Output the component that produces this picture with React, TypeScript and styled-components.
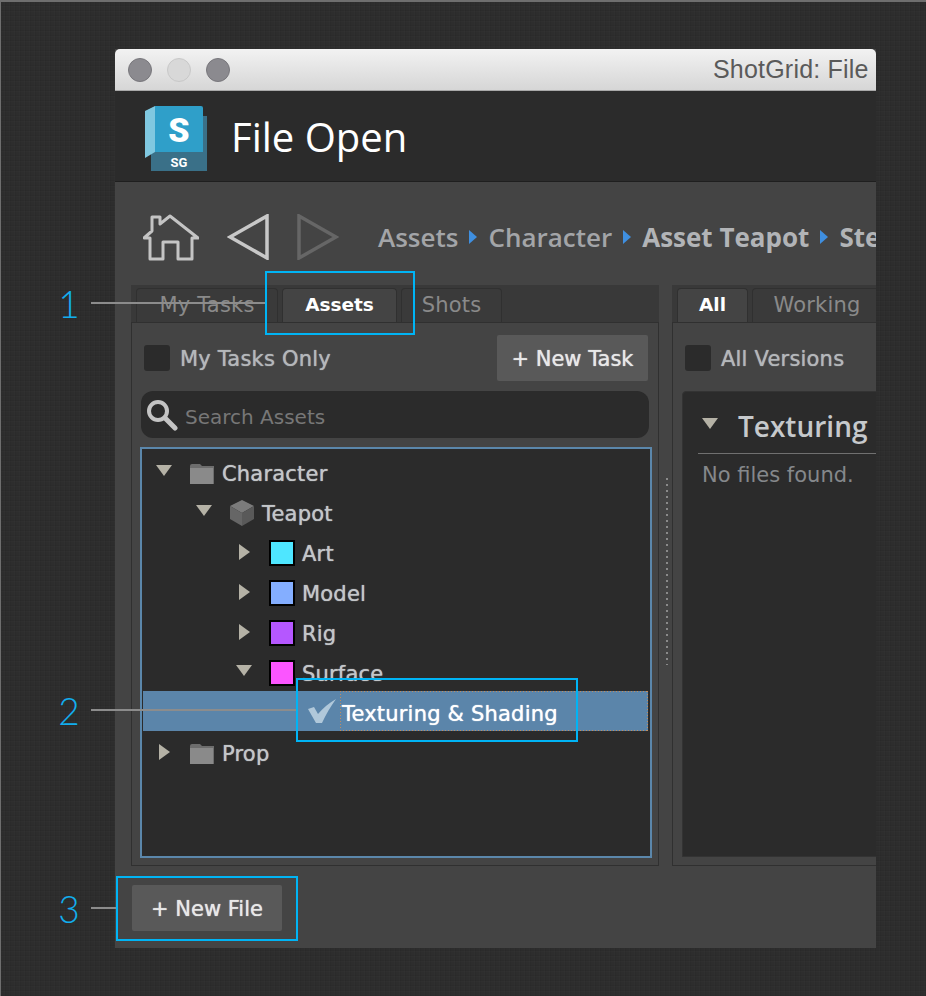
import React from 'react';
import styled, { createGlobalStyle } from 'styled-components';

const GlobalStyle = createGlobalStyle`
  html, body { margin: 0; padding: 0; background: #2c2c2c; }
  * { box-sizing: border-box; }
`;

const uiFont = `"DejaVu Sans", "Open Sans", sans-serif`;
const softText = `text-shadow: 0 0 1px currentColor;`;

const Page = styled.div`
  position: relative;
  width: 926px;
  height: 996px;
  overflow: hidden;
  padding: 49px 0 0 115px;
  font-family: "Open Sans", "Liberation Sans", sans-serif;
  background-color: #2d2d2d;
  background-image:
    repeating-linear-gradient(90deg, rgba(0, 0, 0, 0.05) 0 1px, transparent 1px 4px, rgba(255, 255, 255, 0.01) 4px 5px),
    repeating-linear-gradient(0deg, rgba(0, 0, 0, 0.05) 0 1px, transparent 1px 4px, rgba(255, 255, 255, 0.01) 4px 5px);
  box-shadow: inset 1px 2px 0 #6e6e6e;
`;

const Window = styled.div`
  width: 761px;
  height: 899px;
  display: flex;
  flex-direction: column;
  overflow: hidden;
  background: #444;
`;

const TitleBar = styled.div`
  flex: none;
  height: 42px;
  display: flex;
  align-items: center;
  gap: 15px;
  padding-left: 13px;
  border-radius: 5px 5px 0 0;
  background: linear-gradient(#f2f2f2, #d6d6d6);
  border-bottom: 1px solid #a9a9a9;
`;

const Light = styled.span<{ $off?: boolean }>`
  flex: none;
  width: 24px;
  height: 24px;
  border-radius: 50%;
  background: ${(p) => (p.$off ? '#d8d8d8' : '#8b8a8f')};
  border: 1px solid ${(p) => (p.$off ? '#c8c8c8' : '#78777c')};
`;

const WindowTitle = styled.span`
  margin-left: 468px;
  font-family: "Liberation Sans", Arial, sans-serif;
  font-size: 25px;
  letter-spacing: 0.2px;
  color: #5a5a5a;
  white-space: nowrap;
`;

const Header = styled.header`
  flex: none;
  height: 91px;
  display: flex;
  align-items: center;
  padding: 5px 0 0 30px;
  background: #2b2b2b;
  border-bottom: 1px solid #1f1f1f;
`;

const AppName = styled.h1`
  margin: 0 0 4px 24px;
  font-size: 40px;
  font-weight: 400;
  color: #fff;
`;

const NavRow = styled.nav`
  flex: none;
  height: 103px;
  display: flex;
  align-items: center;
  gap: 28px;
  padding: 7px 0 0 28px;
  white-space: nowrap;

  svg {
    flex: none;
  }
`;

const Crumbs = styled.div`
  flex: none;
  display: flex;
  align-items: center;
  gap: 11px;
  margin-left: 11px;
  font-size: 26px;
`;

const Crumb = styled.span<{ $strong?: boolean }>`
  font-weight: ${(p) => (p.$strong ? 700 : 600)};
  color: ${(p) => (p.$strong ? '#b2b4b7' : '#a3a5a8')};
`;

const CrumbArrow = styled.span`
  width: 0;
  height: 0;
  border-left: 8px solid #3f8fe0;
  border-top: 7px solid transparent;
  border-bottom: 7px solid transparent;
`;

const Panels = styled.div`
  flex: none;
  height: 581px;
  display: flex;
  padding-left: 16px;
`;

const Panel = styled.section<{ $width: number }>`
  flex: none;
  width: ${(p) => p.$width}px;
  display: flex;
  flex-direction: column;
  background: #393939;
`;

const TabStrip = styled.div`
  flex: none;
  height: 37px;
  display: flex;
  align-items: flex-end;
  gap: 4px;
  padding-left: 5px;
`;

const Tab = styled.div<{ $width: number; $active?: boolean }>`
  width: ${(p) => p.$width}px;
  height: 34px;
  display: flex;
  align-items: center;
  justify-content: center;
  padding-bottom: 2px;
  border: 1px solid #303030;
  border-bottom: 0;
  border-radius: 4px 4px 0 0;
  background: ${(p) => (p.$active ? '#444' : '#3a3a3a')};
  color: ${(p) => (p.$active ? '#fff' : '#8a8a8a')};
  font-family: ${uiFont};
  font-size: ${(p) => (p.$active ? 18.5 : 21)}px;
  font-weight: ${(p) => (p.$active ? 700 : 400)};
  letter-spacing: ${(p) => (p.$active ? 0 : 0.2)}px;
  white-space: nowrap;
`;

const Pane = styled.div`
  flex: 1;
  min-height: 0;
  display: flex;
  flex-direction: column;
  gap: 10px;
  padding: 12px 8px 7px 9px;
  background: #444;
  border: 1px solid #303030;
`;

const ToolRow = styled.div`
  flex: none;
  height: 46px;
  display: flex;
  align-items: center;
  padding-left: 3px;
`;

const CheckBox = styled.span`
  width: 26px;
  height: 26px;
  flex: none;
  margin-right: 10px;
  border-radius: 3px;
  background: #2b2b2b;
`;

const RowLabel = styled.span`
  padding-top: 2px;
  font-family: ${uiFont};
  font-size: 21px;
  letter-spacing: 0.2px;
  color: #b4b7ba;
  white-space: nowrap;
  ${softText}
`;

const ActionButton = styled.button<{ $width: number }>`
  width: ${(p) => p.$width}px;
  height: 46px;
  flex: none;
  padding: 2px 0 0;
  border: 0;
  border-radius: 2px;
  background: #595959;
  color: #e8e8e8;
  font-family: ${uiFont};
  font-size: 21px;
  ${softText}
`;

const NewTaskButton = styled(ActionButton)`
  margin-left: auto;
  margin-right: 2px;
`;

const SearchBox = styled.div`
  flex: none;
  height: 47px;
  display: flex;
  align-items: center;
  gap: 7px;
  padding-left: 5px;
  margin-right: 1px;
  border-radius: 12px;
  background: #2b2b2b;
  color: #777;
  font-family: ${uiFont};
  font-size: 20px;
`;

const SearchText = styled.span`
  margin-top: 5px;
`;

const Tree = styled.div`
  flex: 1;
  min-height: 0;
  margin: -1px -2px 0 -1px;
  padding: 2px 2px 0 1px;
  background: #2b2b2b;
  border: 2px solid #5b87ab;
`;

const TreeRow = styled.div<{ $depth: number; $selected?: boolean }>`
  height: 40px;
  display: flex;
  align-items: center;
  padding-top: ${(p) => (p.$selected ? 0 : 4)}px;
  padding-left: ${(p) => 14 + p.$depth * 40}px;
  background: ${(p) => (p.$selected ? '#5b85aa' : 'transparent')};
  color: ${(p) => (p.$selected ? '#fff' : '#c3c6c9')};
  font-family: ${uiFont};
  font-size: 21px;
  letter-spacing: 0.2px;
  white-space: nowrap;
  ${softText}
`;

const TreeLabel = styled.span`
  padding-top: 2px;
`;

const ArrowSlot = styled.span`
  flex: none;
  width: 14px;
  margin-right: 17px;
  display: flex;
  justify-content: center;
`;

const Arrow = styled.span<{ $open?: boolean }>`
  width: 0;
  height: 0;
  border-style: solid;
  border-color: transparent;
  ${(p) =>
    p.$open
      ? 'border-width: 11px 8px 0 8px; border-top-color: #b5b2a6; margin-top: -5px;'
      : 'border-width: 8px 0 8px 11px; border-left-color: #b5b2a6; margin-top: -3px;'}
`;

const IconSlot = styled.span`
  flex: none;
  width: 28px;
  margin-right: 6px;
  display: flex;
  justify-content: center;
  align-items: center;
`;

const Swatch = styled.span<{ $color: string }>`
  width: 26px;
  height: 26px;
  background: ${(p) => p.$color};
  border: 2px solid #000;
`;

const focusDots = '#c08d60 0 1px, transparent 1px 3px';

const FocusLabel = styled.span`
  flex: 1;
  align-self: stretch;
  display: flex;
  align-items: center;
  margin-left: -2px;
  padding: 6px 0 0 2px;
  background:
    repeating-linear-gradient(90deg, ${focusDots}) top / 100% 1px no-repeat,
    repeating-linear-gradient(90deg, ${focusDots}) bottom / 100% 1px no-repeat,
    repeating-linear-gradient(0deg, ${focusDots}) left / 1px 100% no-repeat,
    repeating-linear-gradient(0deg, ${focusDots}) right / 1px 100% no-repeat;
`;

const Splitter = styled.div`
  flex: none;
  width: 13px;
  display: flex;
  justify-content: center;
  padding: 193px 0 0 2px;
`;

const SplitterDots = styled.span`
  width: 2px;
  height: 187px;
  background: repeating-linear-gradient(#8a8a8a 0 2px, transparent 2px 6px);
`;

const Sheet = styled.div`
  flex: 1;
  min-height: 0;
  margin-bottom: 1px;
  padding: 18px 0 0 15px;
  border: 1px solid #333;
  border-radius: 4px 0 0 0;
  background: #2b2b2b;
`;

const SheetHeading = styled.div`
  height: 44px;
  display: flex;
  align-items: center;
  gap: 20px;
  padding-left: 4px;
  padding-bottom: 12px;
  border-bottom: 1px solid #707070;
  color: #c6c9cc;
  font-size: 28px;
  font-weight: 600;
  white-space: nowrap;
`;

const EmptyNote = styled.p`
  margin: 9px 0 0 4px;
  color: #85888b;
  font-family: ${uiFont};
  font-size: 21px;
`;

const Footer = styled.footer`
  flex: 1;
  padding: 19px 17px;
`;

const CalloutBox = styled.div<{ $x: number; $y: number; $w: number; $h: number }>`
  position: absolute;
  left: ${(p) => p.$x}px;
  top: ${(p) => p.$y}px;
  width: ${(p) => p.$w}px;
  height: ${(p) => p.$h}px;
  border: 2px solid #00b4f5;
`;

const CalloutLine = styled.div<{ $y: number; $w: number }>`
  position: absolute;
  left: 91px;
  top: ${(p) => p.$y}px;
  width: ${(p) => p.$w}px;
  height: 2px;
  background: #8c8c8c;
`;

const CalloutNumber = styled.div<{ $y: number }>`
  position: absolute;
  left: 58px;
  width: 22px;
  top: ${(p) => p.$y}px;
  text-align: center;
  font-family: Lato, "Open Sans", sans-serif;
  font-size: 37px;
  font-weight: 300;
  line-height: 44px;
  color: #12aeee;
`;

function Logo() {
  return (
    <svg width="62" height="66" viewBox="0 0 62 66">
      <path d="M6 10h56v55H6z" fill="#3a7088" />
      <path d="M10 0h46q2 0 2 2v44H10z" fill="#2f9fc9" />
      <path d="M0 5l10-5v46L0 52z" fill="#80c8e0" />
      <text x="34" y="36" textAnchor="middle" fontFamily="Roboto, sans-serif" fontWeight="900" fontSize="34" fill="#fff">S</text>
      <text x="34" y="61" textAnchor="middle" fontFamily="Roboto, sans-serif" fontWeight="700" fontSize="13" fill="#fff">SG</text>
    </svg>
  );
}

function HomeIcon() {
  return (
    <svg width="56" height="47" viewBox="0 0 56 47" fill="none" stroke="#c4c4c4" strokeWidth="3" strokeLinejoin="round">
      <path d="M27 2L17 10V3H9v14L1 24h6v21h13V28h15v17h14V24h6z" />
    </svg>
  );
}

function NavTriangle({ back }: { back?: boolean }) {
  return (
    <svg width="42" height="46" viewBox="0 0 42 46" fill="none" stroke={back ? '#c8c8c8' : '#666'} strokeWidth="3.5">
      <path d={back ? 'M40 2v42L3 23z' : 'M2 2v42l37-21z'} />
    </svg>
  );
}

function SearchIcon() {
  return (
    <svg width="32" height="32" viewBox="0 0 32 32" fill="none" stroke="#c4c4c4">
      <circle cx="12" cy="12" r="9" strokeWidth="4" />
      <path d="M19 19l10 10" strokeWidth="5" strokeLinecap="round" />
    </svg>
  );
}

function FolderIcon() {
  return (
    <svg width="26" height="21" viewBox="0 0 26 21">
      <path d="M1 3q0-2 2-2h8l2 2h12v18H1z" fill="#6d6d6d" />
      <path d="M1 5h23v16H1z" fill="#8a8a8a" />
    </svg>
  );
}

function CubeIcon() {
  return (
    <svg width="28" height="28" viewBox="0 0 28 28">
      <path d="M14 1l12 6-12 7L2 7z" fill="#7b7b7b" />
      <path d="M2 7l12 7v13L2 20z" fill="#666" />
      <path d="M26 7L14 14v13l12-7z" fill="#595959" />
    </svg>
  );
}

function CheckIcon() {
  return (
    <svg width="28" height="24" viewBox="0 0 28 24" fill="#b0c8da">
      <path d="M0 10l6-2 4 7C15 9 21 4 28 0c-5 7-10 15-14 24H8z" />
    </svg>
  );
}

type Node = { label: string; depth: number; open?: boolean; icon: 'folder' | 'cube' | string };

const nodes: Node[] = [
  { label: 'Character', depth: 0, open: true, icon: 'folder' },
  { label: 'Teapot', depth: 1, open: true, icon: 'cube' },
  { label: 'Art', depth: 2, icon: '#4ee6ff' },
  { label: 'Model', depth: 2, icon: '#84aeff' },
  { label: 'Rig', depth: 2, icon: '#b557ff' },
  { label: 'Surface', depth: 2, open: true, icon: '#fb55ff' },
];

function NodeRow({ node }: { node: Node }) {
  return (
    <TreeRow $depth={node.depth}>
      <ArrowSlot><Arrow $open={node.open} /></ArrowSlot>
      <IconSlot>
        {node.icon === 'folder' && <FolderIcon />}
        {node.icon === 'cube' && <CubeIcon />}
        {node.icon.startsWith('#') && <Swatch $color={node.icon} />}
      </IconSlot>
      <TreeLabel>{node.label}</TreeLabel>
    </TreeRow>
  );
}

const crumbs = [
  { label: 'Assets' },
  { label: 'Character' },
  { label: 'Asset Teapot', strong: true },
  { label: 'Step', strong: true },
];

export default function App() {
  return (
    <Page>
      <GlobalStyle />
      <Window>
        <TitleBar>
          <Light />
          <Light $off />
          <Light />
          <WindowTitle>ShotGrid: File</WindowTitle>
        </TitleBar>
        <Header>
          <Logo />
          <AppName>File Open</AppName>
        </Header>
        <NavRow>
          <HomeIcon />
          <NavTriangle back />
          <NavTriangle />
          <Crumbs>
            {crumbs.map((crumb, i) => (
              <React.Fragment key={crumb.label}>
                {i > 0 && <CrumbArrow />}
                <Crumb $strong={crumb.strong}>{crumb.label}</Crumb>
              </React.Fragment>
            ))}
          </Crumbs>
        </NavRow>
        <Panels>
          <Panel $width={528}>
            <TabStrip>
              <Tab $width={142}>My Tasks</Tab>
              <Tab $width={115} $active>Assets</Tab>
              <Tab $width={101}>Shots</Tab>
            </TabStrip>
            <Pane>
              <ToolRow>
                <CheckBox />
                <RowLabel>My Tasks Only</RowLabel>
                <NewTaskButton $width={151}>+ New Task</NewTaskButton>
              </ToolRow>
              <SearchBox>
                <SearchIcon />
                <SearchText>Search Assets</SearchText>
              </SearchBox>
              <Tree>
                {nodes.map((node) => <NodeRow key={node.label} node={node} />)}
                <TreeRow $depth={3} $selected>
                  <ArrowSlot />
                  <IconSlot><CheckIcon /></IconSlot>
                  <FocusLabel>Texturing &amp; Shading</FocusLabel>
                </TreeRow>
                <NodeRow node={{ label: 'Prop', depth: 0, icon: 'folder' }} />
              </Tree>
            </Pane>
          </Panel>
          <Splitter><SplitterDots /></Splitter>
          <Panel $width={300}>
            <TabStrip>
              <Tab $width={71} $active>All</Tab>
              <Tab $width={130}>Working</Tab>
            </TabStrip>
            <Pane>
              <ToolRow>
                <CheckBox />
                <RowLabel>All Versions</RowLabel>
              </ToolRow>
              <Sheet>
                <SheetHeading>
                  <Arrow $open />
                  Texturing
                </SheetHeading>
                <EmptyNote>No files found.</EmptyNote>
              </Sheet>
            </Pane>
          </Panel>
        </Panels>
        <Footer>
          <ActionButton $width={150}>+ New File</ActionButton>
        </Footer>
      </Window>

      <CalloutLine $y={302} $w={175} />
      <CalloutBox $x={265} $y={271} $w={150} $h={64} />
      <CalloutNumber $y={282}>1</CalloutNumber>

      <CalloutLine $y={709} $w={206} />
      <CalloutBox $x={296} $y={678} $w={282} $h={64} />
      <CalloutNumber $y={689}>2</CalloutNumber>

      <CalloutLine $y={907} $w={25} />
      <CalloutBox $x={116} $y={876} $w={182} $h={65} />
      <CalloutNumber $y={887}>3</CalloutNumber>
    </Page>
  );
}
